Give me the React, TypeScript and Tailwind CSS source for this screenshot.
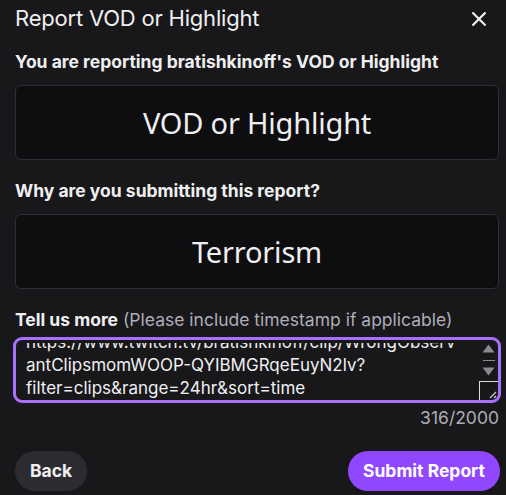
import React from "react";

export default function App() {
  return (
    <div className="w-[506px] h-[495px] bg-[#18181b] text-[#efeff1] overflow-hidden" style={{ fontFamily: "Inter, 'Liberation Sans', sans-serif" }}>
      <div className="flex items-center justify-between pl-[15px] pr-[20px] pt-[2px] h-[34px]">
        <div className="text-[22px] leading-[28px] tracking-[-0.2px]">Report VOD or Highlight</div>
        <svg width="14" height="14" viewBox="0 0 14 14" className="mt-[1px]">
          <path d="M1.2 1.2 L12.8 12.8 M12.8 1.2 L1.2 12.8" stroke="#efeff1" strokeWidth="2.2" strokeLinecap="square" />
        </svg>
      </div>
      <div className="pl-[15px] pr-[7px] flex flex-col">
        <div className="mt-[17px] text-[17.5px] leading-[22px] font-bold">You are reporting bratishkinoff's VOD or Highlight</div>
        <div className="mt-[12px] h-[75px] rounded-[6px] border border-[#303034] bg-[#0e0e10] flex items-center justify-center">
          <span className="text-[29px] tracking-[-0.2px]" style={{ fontFamily: "'Noto Sans', 'Open Sans', sans-serif" }}>VOD or Highlight</span>
        </div>
        <div className="mt-[20px] text-[17.5px] leading-[22px] font-bold">Why are you submitting this report?</div>
        <div className="mt-[12px] h-[75px] rounded-[6px] border border-[#303034] bg-[#0e0e10] flex items-center justify-center">
          <span className="text-[29px] tracking-[-0.2px]" style={{ fontFamily: "'Noto Sans', 'Open Sans', sans-serif" }}>Terrorism</span>
        </div>
        <div className="mt-[20px] text-[17.5px] leading-[22px]">
          <span className="font-bold">Tell us more</span>{" "}
          <span className="text-[#adadb8]">(Please include timestamp if applicable)</span>
        </div>
        <div className="mt-[6px] -mx-[2px] h-[66px] rounded-[9px] border-[3px] border-[#a970ff] bg-[#18181b] relative overflow-hidden">
          <div className="mt-[3px] h-[57px] overflow-hidden">
            <div className="pl-[10px] pr-[28px] -mt-[12px] text-[17px] leading-[23px] text-[#efeff1] whitespace-nowrap">
              <div>https://www.twitch.tv/bratishkinoff/clip/WrongObserv</div>
              <div>antClipsmomWOOP-QYIBMGRqeEuyN2lv?</div>
              <div>filter=clips&amp;range=24hr&amp;sort=time</div>
            </div>
          </div>
          <div className="absolute right-[3px] top-[4px] w-[13px] flex flex-col items-center">
            <svg width="13" height="9" viewBox="0 0 13 9"><path d="M6.5 0.5 L12.5 8.5 L0.5 8.5 Z" fill="#8a8a8e" /></svg>
            <div className="mt-[7px] w-[12px] h-[1px] bg-[#8a8a8e]" />
            <svg width="13" height="9" viewBox="0 0 13 9" className="mt-[6px]"><path d="M0.5 0.5 L12.5 0.5 L6.5 8.5 Z" fill="#8a8a8e" /></svg>
          </div>
          <div className="absolute right-0 bottom-0 w-[19px] h-[19px] border-t border-l border-[#dcdcdc]">
            <svg width="18" height="18" viewBox="0 0 18 18" className="absolute right-0 bottom-0">
              <path d="M16 10 L10 16 M16 14 L14 16" stroke="#cfcfcf" strokeWidth="1.2" />
            </svg>
          </div>
        </div>
        <div className="mt-[4px] text-right text-[17.5px] leading-[22px] text-[#adadb8]">316/2000</div>
        <div className="mt-[22px] flex items-center justify-between">
          <button className="h-[40px] px-[15px] rounded-full bg-[#2c2c30] text-[17.5px] font-bold text-[#efeff1]">Back</button>
          <button className="h-[40px] px-[15px] rounded-full bg-[#9147ff] text-[17.5px] font-bold text-white -mr-[1px]">Submit Report</button>
        </div>
      </div>
    </div>
  );
}
